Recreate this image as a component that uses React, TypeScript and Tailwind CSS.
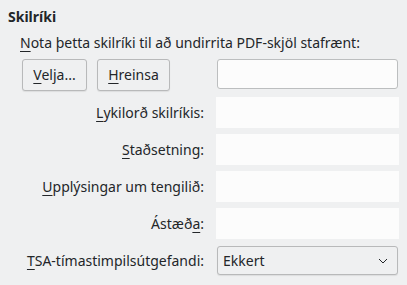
import React from "react";

const U = ({ children }: { children: React.ReactNode }) => (
  <span className="underline decoration-1 underline-offset-[3px]">{children}</span>
);

const Field = () => <div className="h-[31px] w-[183px] bg-[#fcfcfc]" />;

export default function App() {
  const rows: [React.ReactNode, string][] = [
    [<><U>L</U>ykilorð skilríkis:</>, "a"],
    [<><U>S</U>taðsetning:</>, "b"],
    [<><U>U</U>pplýsingar um tengilið:</>, "c"],
    [<>Ástæð<U>a</U>:</>, "d"],
  ];
  return (
    <div
      className="w-[407px] h-[285px] bg-[#eff0f1] text-[#232629] text-[14px] overflow-hidden"
      style={{ fontFamily: '"Noto Sans", sans-serif' }}
    >
      <div className="pl-[8px] pt-[7px] font-bold leading-[20px]">Skilríki</div>
      <div className="pl-[20px] pt-[6px] leading-[20px]">
        <U>N</U>ota þetta skilríki til að undirrita PDF-skjöl stafrænt:
      </div>
      <div className="flex items-center pl-[22px] mt-[6px] h-[32px]">
        <button className="h-[32px] w-[65px] rounded-[3px] border border-[#b8b9ba] bg-[#eff0f1] shadow-[0_1px_1px_rgba(0,0,0,0.08)] leading-[20px]">
          <U>V</U>elja...
        </button>
        <button className="ml-[10px] h-[32px] w-[73px] rounded-[3px] border border-[#b8b9ba] bg-[#eff0f1] shadow-[0_1px_1px_rgba(0,0,0,0.08)] leading-[20px]">
          <U>H</U>reinsa
        </button>
        <div className="ml-[47px] self-start h-[30px] w-[181px] rounded-[3px] border border-[#bcbebf] bg-[#fcfcfc]" />
      </div>
      <div className="flex flex-col gap-[6px] mt-[6px]">
        {rows.map(([label, k]) => (
          <div key={k} className="flex items-center">
            <div className="w-[204px] text-right leading-[20px]">{label}</div>
            <div className="ml-[12px]">
              <Field />
            </div>
          </div>
        ))}
        <div className="flex items-center mt-[1px]">
          <div className="w-[204px] text-right leading-[20px]">
            <U>T</U>SA-tímastimpilsútgefandi:
          </div>
          <div className="ml-[13px] h-[29px] w-[181px] rounded-[3px] border border-[#b8b9ba] bg-[#eff0f1] shadow-[0_1px_1px_rgba(0,0,0,0.08)] flex items-center pl-[5px] pr-[9px] justify-between">
            <span className="leading-[20px]">Ekkert</span>
            <svg width="10" height="6" viewBox="0 0 10 6" fill="none">
              <path d="M1 1 L5 5 L9 1" stroke="#232629" strokeWidth="1" />
            </svg>
          </div>
        </div>
      </div>
    </div>
  );
}
